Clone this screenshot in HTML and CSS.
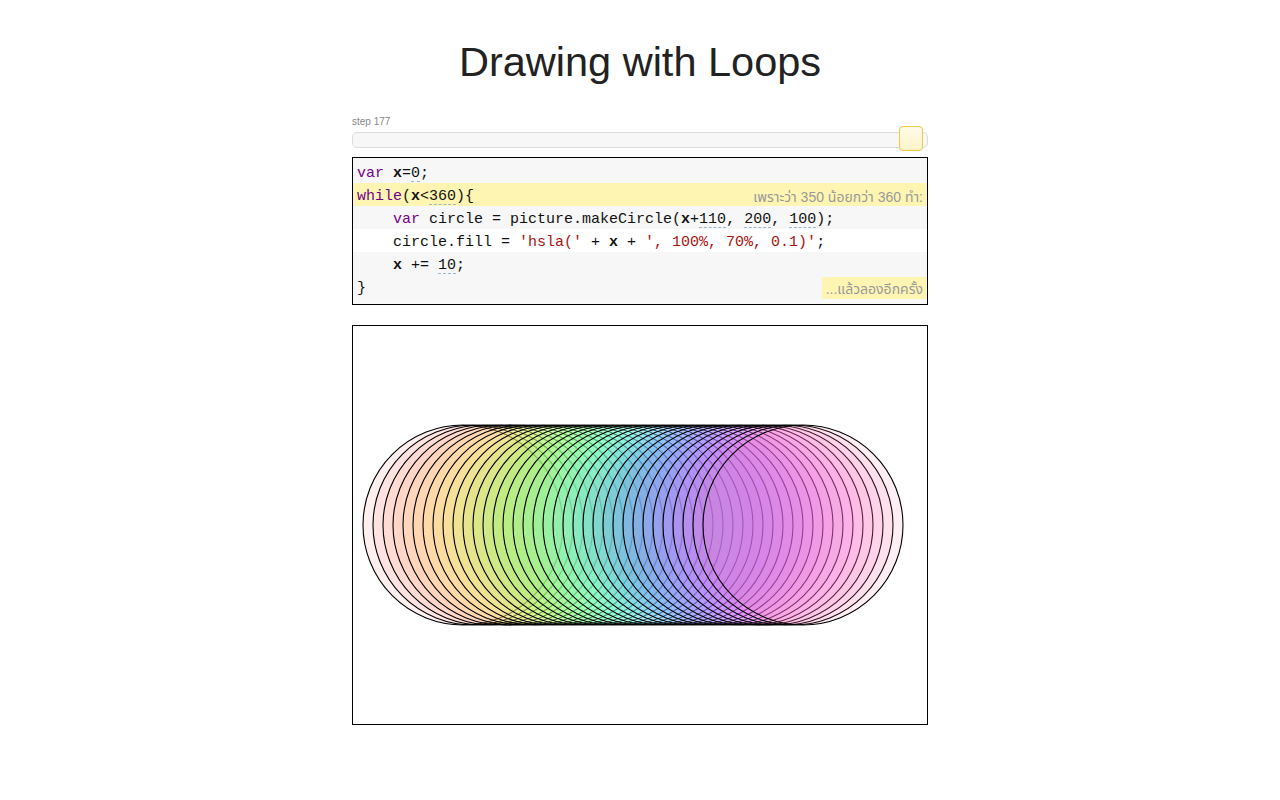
FILE: index.html
```html
<!DOCTYPE html>
<html lang="th">
<head>
<meta charset="utf-8">
<title>Drawing with Loops</title>
<link rel="stylesheet" href="styles.css">
</head>
<body>
<div class="page">
  <h1 class="title">Drawing with Loops</h1>
  <div class="step-label">step 177</div>
  <div class="slider">
    <div class="slider-handle"></div>
  </div>
  <div class="code">
    <div class="row gray"><span class="src"><span class="kw">var</span> <span class="var">x</span>=<span class="num">0</span>;</span></div>
    <div class="row current"><span class="src"><span class="kw">while</span>(<span class="var">x</span>&lt;<span class="num">360</span>){</span><span class="note">เพราะว่า 350 น้อยกว่า 360 ทำ:</span></div>
    <div class="row gray"><span class="src">    <span class="kw">var</span> circle = picture.makeCircle(<span class="var">x</span>+<span class="num">110</span>, <span class="num">200</span>, <span class="num">100</span>);</span></div>
    <div class="row white"><span class="src">    circle.fill = <span class="str">'hsla('</span> + <span class="var">x</span> + <span class="str">', 100%, 70%, 0.1)'</span>;</span></div>
    <div class="row gray"><span class="src">    <span class="var">x</span> += <span class="num">10</span>;</span></div>
    <div class="row gray last"><span class="src">}</span><span class="note boxed">...แล้วลองอีกครั้ง</span></div>
  </div>
  <div class="canvas">
    <svg width="574" height="398" viewBox="0 0 574 398" xmlns="http://www.w3.org/2000/svg">
      <g stroke="#000" stroke-width="1.1">
        <circle cx="110" cy="199" r="100" fill="hsla(0,100%,70%,0.1)"/>
        <circle cx="120" cy="199" r="100" fill="hsla(10,100%,70%,0.1)"/>
        <circle cx="130" cy="199" r="100" fill="hsla(20,100%,70%,0.1)"/>
        <circle cx="140" cy="199" r="100" fill="hsla(30,100%,70%,0.1)"/>
        <circle cx="150" cy="199" r="100" fill="hsla(40,100%,70%,0.1)"/>
        <circle cx="160" cy="199" r="100" fill="hsla(50,100%,70%,0.1)"/>
        <circle cx="170" cy="199" r="100" fill="hsla(60,100%,70%,0.1)"/>
        <circle cx="180" cy="199" r="100" fill="hsla(70,100%,70%,0.1)"/>
        <circle cx="190" cy="199" r="100" fill="hsla(80,100%,70%,0.1)"/>
        <circle cx="200" cy="199" r="100" fill="hsla(90,100%,70%,0.1)"/>
        <circle cx="210" cy="199" r="100" fill="hsla(100,100%,70%,0.1)"/>
        <circle cx="220" cy="199" r="100" fill="hsla(110,100%,70%,0.1)"/>
        <circle cx="230" cy="199" r="100" fill="hsla(120,100%,70%,0.1)"/>
        <circle cx="240" cy="199" r="100" fill="hsla(130,100%,70%,0.1)"/>
        <circle cx="250" cy="199" r="100" fill="hsla(140,100%,70%,0.1)"/>
        <circle cx="260" cy="199" r="100" fill="hsla(150,100%,70%,0.1)"/>
        <circle cx="270" cy="199" r="100" fill="hsla(160,100%,70%,0.1)"/>
        <circle cx="280" cy="199" r="100" fill="hsla(170,100%,70%,0.1)"/>
        <circle cx="290" cy="199" r="100" fill="hsla(180,100%,70%,0.1)"/>
        <circle cx="300" cy="199" r="100" fill="hsla(190,100%,70%,0.1)"/>
        <circle cx="310" cy="199" r="100" fill="hsla(200,100%,70%,0.1)"/>
        <circle cx="320" cy="199" r="100" fill="hsla(210,100%,70%,0.1)"/>
        <circle cx="330" cy="199" r="100" fill="hsla(220,100%,70%,0.1)"/>
        <circle cx="340" cy="199" r="100" fill="hsla(230,100%,70%,0.1)"/>
        <circle cx="350" cy="199" r="100" fill="hsla(240,100%,70%,0.1)"/>
        <circle cx="360" cy="199" r="100" fill="hsla(250,100%,70%,0.1)"/>
        <circle cx="370" cy="199" r="100" fill="hsla(260,100%,70%,0.1)"/>
        <circle cx="380" cy="199" r="100" fill="hsla(270,100%,70%,0.1)"/>
        <circle cx="390" cy="199" r="100" fill="hsla(280,100%,70%,0.1)"/>
        <circle cx="400" cy="199" r="100" fill="hsla(290,100%,70%,0.1)"/>
        <circle cx="410" cy="199" r="100" fill="hsla(300,100%,70%,0.1)"/>
        <circle cx="420" cy="199" r="100" fill="hsla(310,100%,70%,0.1)"/>
        <circle cx="430" cy="199" r="100" fill="hsla(320,100%,70%,0.1)"/>
        <circle cx="440" cy="199" r="100" fill="hsla(330,100%,70%,0.1)"/>
        <circle cx="450" cy="199" r="100" fill="hsla(340,100%,70%,0.1)"/>
      </g>
    </svg>
  </div>
</div>
</body>
</html>
```

FILE: styles.css
```css
html, body {
  margin: 0;
  padding: 0;
  background: #fff;
}

body {
  font-family: "Liberation Sans", Arial, "Noto Sans Thai", "Noto Sans", sans-serif;
  color: #222;
}

.page {
  width: 576px;
  margin: 0 auto;
  padding-bottom: 60px;
}

.title {
  margin: 0;
  padding-top: 37px;
  font-size: 41.5px;
  font-weight: normal;
  line-height: 50px;
  text-align: center;
  color: #222;
}

.step-label {
  margin-top: 29px;
  font-size: 10px;
  line-height: 12px;
  color: #888;
}

.slider {
  position: relative;
  margin-top: 4px;
  height: 14px;
  border: 1px solid #dcdcdc;
  border-radius: 5px;
  background: #f7f7f7;
}

.slider-handle {
  position: absolute;
  right: 4px;
  top: -7px;
  width: 22px;
  height: 23px;
  border: 1px solid #f5c842;
  border-radius: 4px;
  background: linear-gradient(#fffbea, #fff3c8);
}

.code {
  margin-top: 9px;
  border: 1px solid #000;
  padding: 2px 0 6px;
  background: #f8f8f8;
  font-family: "Liberation Mono", "Courier New", monospace;
  font-size: 15px;
  color: #111;
}

.row {
  box-sizing: border-box;
  display: flex;
  justify-content: space-between;
  align-items: stretch;
  height: 23px;
  padding-top: 5px;
  line-height: 18px;
  padding-left: 4px;
}

.row.gray { background: #f7f7f7; }
.row.white { background: #fff; }
.row.current { background: #fff5b3; }

.src {
  white-space: pre;
}

.kw { color: #708; }
.var { font-weight: bold; }
.str { color: #a11; }
.num {
  text-decoration: underline dashed #9bb8c8;
  text-underline-offset: 4px;
  text-decoration-thickness: 1px;
}

.note {
  font-family: "Liberation Sans", Arial, "Noto Sans Thai", "Noto Sans", sans-serif;
  font-size: 14px;
  color: #999;
  padding: 0 4px;
  white-space: nowrap;
}

.note.boxed {
  background: #fff5b3;
  margin-top: -3px;
  padding-top: 3px;
  height: 22px;
  box-sizing: border-box;
  line-height: 19px;
}

.row.last {
  height: 23px;
}

.canvas {
  margin-top: 20px;
  border: 1px solid #000;
  height: 398px;
  background: #fff;
}

.canvas svg {
  display: block;
}
```
